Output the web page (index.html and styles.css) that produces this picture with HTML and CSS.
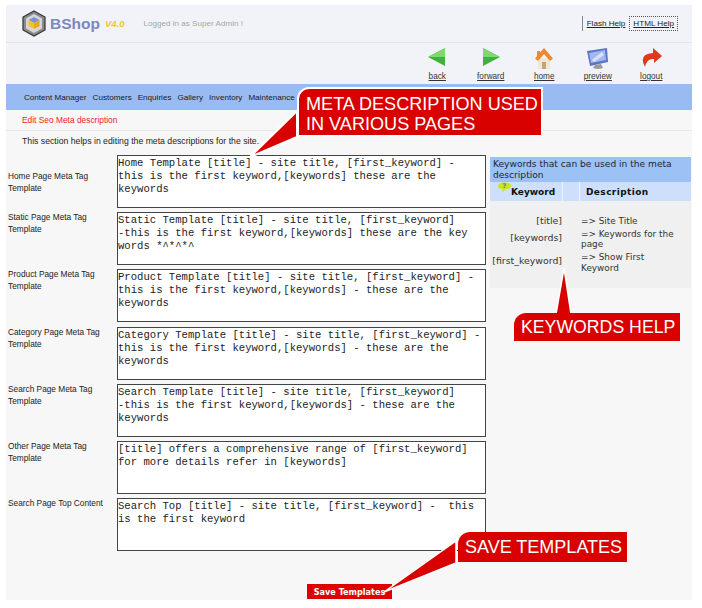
FILE: index.html
```html
<!DOCTYPE html>
<html lang="en">
<head>
    <meta charset="UTF-8">
    <title>BShop V4.0 - Edit Seo Meta description</title>
    <link rel="stylesheet" href="styles.css">
</head>
<body>
    <div class="page">
        <header class="top">
            <div class="brand">
                <svg class="logo" width="24" height="27" viewBox="0 0 24 27">
                    <path d="M12 1 L23 7 V20 L12 26 L1 20 V7 Z" fill="#8a8a8a" stroke="#333" stroke-width="1.2"/>
                    <path d="M12 4 L20 8.5 V18.5 L12 23 L4 18.5 V8.5 Z" fill="#d6d6d6"/>
                    <path d="M12 7 L17.5 10 L12 13 L6.5 10 Z" fill="#7d92d6"/>
                    <path d="M6.5 10 L12 13 V19 L6.5 16 Z" fill="#f2c230"/>
                    <path d="M17.5 10 L12 13 V19 L17.5 16 Z" fill="#e8a818"/>
                </svg>
                <span class="brand-name">BShop</span>
                <span class="brand-version">V4.0</span>
                <span class="logged-in">Logged in as Super Admin !</span>
            </div>
            <div class="help-links">
                <a href="#">Flash Help</a>
                <a href="#" class="help-active">HTML Help</a>
            </div>
        </header>

        <div class="toolbar">
            <a href="#" class="tool">
                <svg width="18" height="18" viewBox="0 0 18 18"><path d="M17 0 V18 L0 9 Z" fill="#3fb13f"/><path d="M17 0 V9 H0 Z" fill="#7fd86f"/></svg>
                back
            </a>
            <a href="#" class="tool">
                <svg width="18" height="18" viewBox="0 0 18 18"><path d="M1 0 V18 L18 9 Z" fill="#3fb13f"/><path d="M1 0 V9 H18 Z" fill="#7fd86f"/></svg>
                forward
            </a>
            <a href="#" class="tool">
                <svg width="18" height="21" viewBox="0 0 18 21"><path d="M3 10 H15 V21 H3 Z" fill="#f0e6d2"/><path d="M7 14 H11 V21 H7 Z" fill="#b9a777"/><path d="M0 10.5 L9 0 L18 10.5 L15 13 L9 6 L3 13 Z" fill="#ea8a30"/><path d="M2 3 H5 V6 L2 9 Z" fill="#ea8a30"/></svg>
                home
            </a>
            <a href="#" class="tool">
                <svg width="21" height="22" viewBox="0 0 21 22"><path d="M0 3 L20 0 L21 14 L3 18 Z" fill="#5c74c8"/><path d="M2 5 L18 2 L19 12 L4 15 Z" fill="#a3b8f0"/><path d="M5 12 L15 4 L17 7 L7 14 Z" fill="#d8e2fb"/><path d="M8 17 L14 16 L16 20 Q11 22 6 20 Z" fill="#9a9a9a"/></svg>
                preview
            </a>
            <a href="#" class="tool">
                <svg width="22" height="19" viewBox="0 0 22 19"><path d="M13 0 L22 8 L14 15 V11 Q7 10 5 19 Q-2 6 13 5 Z" fill="#e03a1c"/></svg>
                logout
            </a>
        </div>

        <nav class="menu">
            <a href="#">Content Manager</a>
            <a href="#">Customers</a>
            <a href="#">Enquiries</a>
            <a href="#">Gallery</a>
            <a href="#">Inventory</a>
            <a href="#">Maintenance</a>
        </nav>

        <div class="page-title">Edit Seo Meta description</div>
        <div class="page-intro">This section helps in editing the meta descriptions for the site.</div>

        <div class="content">
            <form class="templates">
                <div class="row">
                    <label class="first-label">Home Page Meta Tag Template</label>
                    <textarea>Home Template [title] - site title, [first_keyword] -
this is the first keyword,[keywords] these are the
keywords</textarea>
                </div>
                <div class="row">
                    <label>Static Page Meta Tag Template</label>
                    <textarea>Static Template [title] - site title, [first_keyword]
-this is the first keyword,[keywords] these are the key
words *^*^*^</textarea>
                </div>
                <div class="row">
                    <label>Product Page Meta Tag Template</label>
                    <textarea>Product Template [title] - site title, [first_keyword] -
this is the first keyword,[keywords] - these are the
keywords</textarea>
                </div>
                <div class="row">
                    <label>Category Page Meta Tag Template</label>
                    <textarea>Category Template [title] - site title, [first_keyword] -
this is the first keyword,[keywords] - these are the
keywords</textarea>
                </div>
                <div class="row">
                    <label>Search Page Meta Tag Template</label>
                    <textarea>Search Template [title] - site title, [first_keyword]
-this is the first keyword,[keywords] - these are the
keywords</textarea>
                </div>
                <div class="row">
                    <label>Other Page Meta Tag Template</label>
                    <textarea>[title] offers a comprehensive range of [first_keyword]
for more details refer in [keywords]</textarea>
                </div>
                <div class="row">
                    <label>Search Page Top Content</label>
                    <textarea>Search Top [title] - site title, [first_keyword] -  this
is the first keyword</textarea>
                </div>
                <div class="save-row">
                    <button type="button" class="save-button">Save Templates</button>
                </div>
            </form>

            <aside class="help-panel">
                <div class="help-title">Keywords that can be used in the meta description</div>
                <div class="help-head">
                    <div class="col-key">
                        <svg class="balloon" width="13" height="11" viewBox="0 0 14 11"><path d="M7 0 Q14 0 14 4 Q14 7 8 7.5 L5 11 L5 7.5 Q0 7 0 4 Q0 0 7 0 Z" fill="#c4e818"/><text x="7" y="6.5" font-size="7" text-anchor="middle" fill="#777">?</text></svg>Keyword
                    </div>
                    <div class="col-gap"></div>
                    <div class="col-desc">Description</div>
                </div>
                <div class="help-body">
                    <div class="key">[title]</div><div>=&gt; Site Title</div>
                    <div class="key key-mid">[keywords]</div><div>=&gt; Keywords for the page</div>
                    <div class="key key-mid">[first_keyword]</div><div>=&gt; Show First Keyword</div>
                </div>
            </aside>
        </div>

        <!-- callouts drawn over the screen -->
        <svg class="pointers" width="702" height="608" viewBox="0 0 702 608">
            <path d="M297 111 V137 L250 157 Z" fill="#d90000" stroke="#fff" stroke-width="2"/>
            <path d="M556 314 H571 L564 268 Z" fill="#d90000" stroke="#fff" stroke-width="1.5"/>
            <path d="M456 541 V563 L384 592 Z" fill="#d90000" stroke="#fff" stroke-width="1.5"/>
        </svg>
        <div class="callout callout-meta">META DESCRIPTION USED<br>IN VARIOUS PAGES</div>
        <div class="callout callout-keywords">KEYWORDS HELP</div>
        <div class="callout callout-save">SAVE TEMPLATES</div>
    </div>
</body>
</html>
```

FILE: styles.css
```css
body {
    margin: 0;
    background-color: #fff;
    font-family: "Liberation Sans", Arial, sans-serif;
    font-size: 9px;
    color: #222;
}
.page {
    position: relative;
    width: 686px;
    height: 595px;
    margin: 5px 0 0 6px;
    background-color: #f7f7f7;
}
.top {
    height: 37px;
    display: flex;
    align-items: center;
    justify-content: space-between;
    background-color: #f2f3f8;
    border-bottom: 1px solid #e4e5ea;
}
.brand {
    display: flex;
    align-items: center;
    padding-left: 16px;
}
.logo {
    margin-right: 4px;
}
.brand-name {
    font-size: 15.5px;
    font-weight: bold;
    color: #7b88bd;
}
.brand-version {
    margin-left: 5px;
    font-size: 9.5px;
    font-weight: bold;
    font-style: italic;
    color: #f2c335;
}
.logged-in {
    margin-left: 19px;
    font-size: 8.1px;
    color: #a5a5a5;
}
.help-links {
    display: flex;
    align-items: center;
    margin-right: 14px;
    border-left: 1px solid #888;
}
.help-links a {
    padding: 2px 4px;
    color: #222;
    font-size: 8.1px;
    text-decoration: underline;
}
.help-links .help-active {
    padding: 2px 3px;
    border: 1px dotted #555;
}
.toolbar {
    box-sizing: border-box;
    height: 41px;
    display: flex;
    justify-content: flex-end;
    background-color: #f2f3f8;
    padding-right: 14px;
}
.tool {
    width: 53.5px;
    display: flex;
    flex-direction: column;
    align-items: center;
    justify-content: space-between;
    padding: 5px 0 3px;
    box-sizing: border-box;
    color: #333;
    font-size: 8.2px;
    text-decoration: underline;
}
.menu {
    height: 26px;
    display: flex;
    align-items: center;
    gap: 6px;
    padding-left: 18px;
    background-color: #98bcf2;
}
.menu a {
    color: #1a1a1a;
    font-size: 8.1px;
    text-decoration: none;
}
.page-title {
    height: 20px;
    line-height: 20px;
    padding-left: 16px;
    color: #f01c1c;
    font-size: 8.4px;
    border-bottom: 1px solid #e6e6e6;
}
.page-intro {
    height: 19px;
    line-height: 20px;
    padding-left: 16px;
    font-size: 8.7px;
}
.content {
    display: flex;
    align-items: flex-start;
}
.templates {
    width: 479px;
    padding: 5px 0 0 2px;
}
.row {
    display: flex;
    align-items: flex-start;
    margin-bottom: 4.2px;
}
.row label {
    width: 109px;
    margin-top: -1px;
    line-height: 12px;
    font-size: 8.3px;
}
.row .first-label {
    padding-top: 16px;
}
.row textarea {
    box-sizing: border-box;
    width: 369px;
    height: 53px;
    margin: 0;
    padding: 1px 0 0;
    resize: none;
    overflow: hidden;
    white-space: pre;
    border: 1px solid #444;
    border-radius: 0;
    outline: none;
    background-color: #fff;
    font-family: "Liberation Mono", "Courier New", monospace;
    font-size: 10.6px;
    line-height: 13px;
    color: #222;
}
.save-row {
    padding-top: 29px;
    text-align: right;
    width: 384px;
}
.save-button {
    display: inline-block;
    width: 85px;
    height: 15px;
    padding: 0;
    border: 1px solid #d80000;
    background-color: #e00000;
    color: #fff;
    font-family: "DejaVu Sans", sans-serif;
    font-size: 8.1px;
    font-weight: bold;
}
.help-panel {
    width: 201px;
    margin: 7px 0 0 3px;
    background-color: #f0f0f0;
    font-family: "DejaVu Sans", sans-serif;
    font-size: 8.9px;
    color: #333;
}
.help-title {
    height: 25px;
    padding: 2px 3px;
    box-sizing: border-box;
    line-height: 11px;
    font-size: 9.1px;
    background-color: #9cc2f5;
    color: #223;
}
.help-head {
    height: 19px;
    display: flex;
    font-size: 9px;
    font-weight: bold;
    line-height: 20px;
    color: #111;
    background-color: #cddffa;
}
.col-key {
    width: 73px;
    padding-left: 8px;
    box-sizing: border-box;
    border-right: 1px solid #f0f4fb;
}
.balloon {
    vertical-align: 2px;
}
.col-gap {
    width: 16px;
    border-right: 1px solid #f0f4fb;
}
.col-desc {
    padding-left: 6px;
    letter-spacing: 0.4px;
}
.help-body {
    display: grid;
    grid-template-columns: 72px 1fr;
    column-gap: 19px;
    row-gap: 2px;
    padding: 15px 0 14px;
    line-height: 10.7px;
}
.help-body > div:nth-child(even) {
    padding-right: 10px;
}
.key {
    text-align: right;
    font-size: 9.4px;
}
.key-mid {
    padding-top: 4px;
}
.pointers {
    position: absolute;
    left: -6px;
    top: -5px;
    pointer-events: none;
}
.callout {
    position: absolute;
    box-sizing: border-box;
    background-color: #d90000;
    color: #fff;
    font-size: 18px;
    line-height: 20px;
    border-top-left-radius: 12px;
    white-space: nowrap;
}
.callout-meta {
    left: 291px;
    top: 82px;
    width: 246px;
    height: 50px;
    padding: 5px 0 0 7px;
    font-size: 18.1px;
    border: 2px solid #fff;
}
.callout-keywords {
    left: 508px;
    top: 308px;
    width: 166px;
    height: 28px;
    padding: 4px 0 0 7px;
    font-size: 17.7px;
}
.callout-save {
    left: 452px;
    top: 527px;
    width: 169px;
    height: 30px;
    padding: 5px 0 0 7px;
}
```
